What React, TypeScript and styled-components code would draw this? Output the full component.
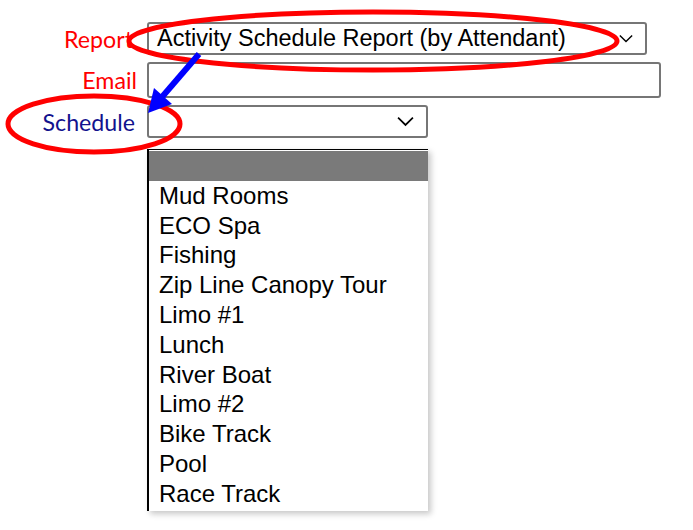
import React from "react";
import styled, { createGlobalStyle } from "styled-components";

const GlobalStyle = createGlobalStyle`
  html, body {
    margin: 0;
    padding: 0;
    background: #ffffff;
  }
  body {
    font-family: "Liberation Sans", Arial, sans-serif;
  }
`;

const Page = styled.div`
  position: relative;
  width: 693px;
  height: 530px;
  overflow: hidden;
  background: #ffffff;
`;

const Form = styled.div`
  display: grid;
  grid-template-columns: 137px auto;
  column-gap: 10px;
  row-gap: 7px;
  padding-top: 22px;
  align-items: center;
`;

const Label = styled.label<{ $color: string; $inset?: number }>`
  font-family: Lato, "Open Sans", sans-serif;
  font-size: 23.2px;
  line-height: 26px;
  color: ${(p) => p.$color};
  text-align: right;
  padding-right: ${(p) => p.$inset ?? 0}px;
`;

const SelectBox = styled.div<{ $width: number }>`
  box-sizing: border-box;
  width: ${(p) => p.$width}px;
  height: 33px;
  border: 2px solid #767676;
  border-radius: 3px;
  display: flex;
  align-items: center;
  justify-content: space-between;
  padding: 0 12px 0 8px;
  font-size: 23.5px;
  color: #000;
`;

const TextInput = styled.div`
  box-sizing: border-box;
  width: 514px;
  height: 36px;
  border: 2px solid #767676;
  border-radius: 3px;
`;

const DropList = styled.ul`
  grid-column: 2;
  box-sizing: border-box;
  width: 281px;
  margin: 4px 0 0 0;
  padding: 1px 0 2px 0;
  list-style: none;
  border-top: 1px solid #000;
  border-left: 2px solid #000;
  background: #fff;
  box-shadow: 3px 3px 6px rgba(0, 0, 0, 0.22);
`;

const Option = styled.li<{ $selected?: boolean }>`
  height: 29.8px;
  line-height: 29.8px;
  padding-left: 10px;
  font-size: 24px;
  color: #000;
  white-space: nowrap;
  background: ${(p) => (p.$selected ? "#7a7a7a" : "transparent")};
`;

const Overlay = styled.svg`
  position: absolute;
  left: 0;
  top: 0;
  pointer-events: none;
`;

const Chevron = ({ size }: { size: number }) => (
  <svg width={size} height={size / 2 + 2} viewBox="0 0 16 9">
    <path d="M1 1 L8 8 L15 1" fill="none" stroke="#000" strokeWidth="1.6" />
  </svg>
);

const schedules = [
  "Mud Rooms",
  "ECO Spa",
  "Fishing",
  "Zip Line Canopy Tour",
  "Limo #1",
  "Lunch",
  "River Boat",
  "Limo #2",
  "Bike Track",
  "Pool",
  "Race Track",
];

export default function App() {
  return (
    <Page>
      <GlobalStyle />
      <Form>
        <Label $color="#ff0000" $inset={4}>Report</Label>
        <SelectBox $width={500}>
          <span>Activity Schedule Report (by Attendant)</span>
          <Chevron size={14} />
        </SelectBox>
        <Label $color="#ff0000">Email</Label>
        <TextInput />
        <Label $color="#12128e" $inset={2}>Schedule</Label>
        <SelectBox $width={281}>
          <span />
          <Chevron size={17} />
        </SelectBox>
        <DropList>
          <Option $selected>&nbsp;</Option>
          {schedules.map((s) => (
            <Option key={s}>{s}</Option>
          ))}
        </DropList>
      </Form>
      <Overlay width="693" height="530">
        <ellipse cx="373" cy="41" rx="244" ry="29" fill="none" stroke="#ff0000" strokeWidth="5" />
        <ellipse cx="94" cy="124" rx="86" ry="28" fill="none" stroke="#ff0000" strokeWidth="5" />
        <line x1="199" y1="54" x2="162" y2="97" stroke="#0000ff" strokeWidth="6" />
        <polygon points="148,113 154,88 172,104" fill="#0000ff" />
      </Overlay>
    </Page>
  );
}
